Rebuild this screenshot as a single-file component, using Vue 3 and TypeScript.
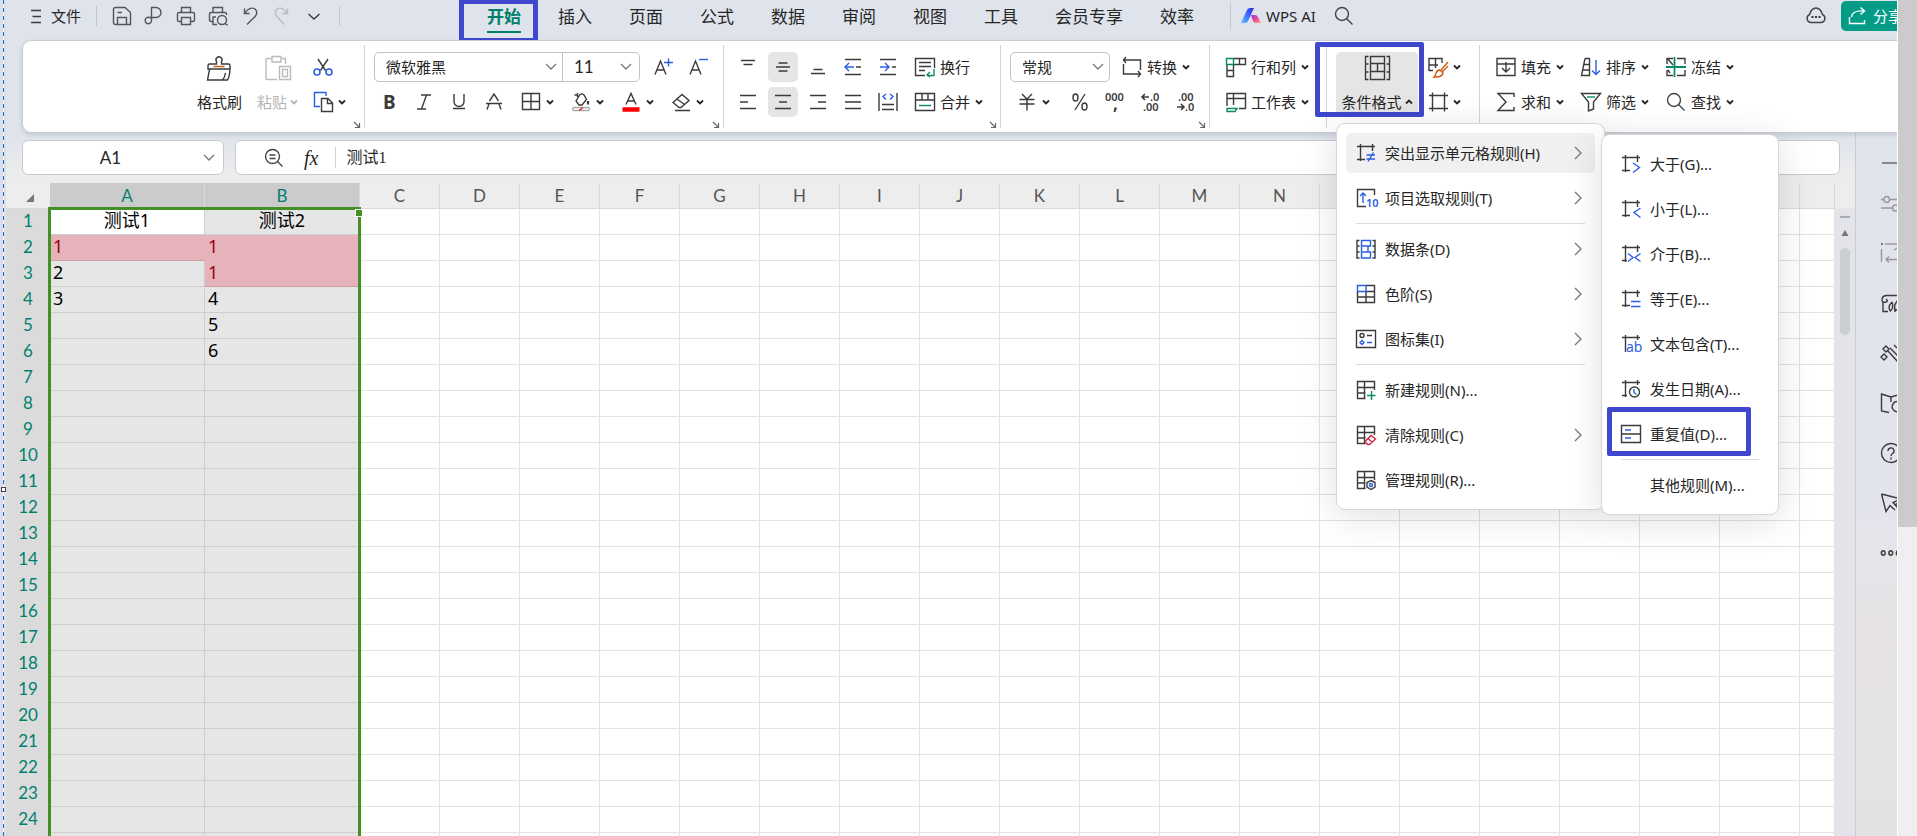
<script setup lang="ts">
import { h, ref } from 'vue'

interface Shape {
  d?: string
  t?: string
  x?: number
  y?: number
  s?: number
  c?: string
  w?: number
  b?: number
}

const K = '#3b3b3b'
const BL = '#2b5fe3'
const GR = '#0a8a66'
const OR = '#cf5a14'
const RD = '#d1274b'

const crop = 'M1 3.5H19M4.5 1V18M16.5 1V8M1 16.5H9'
const table = 'M18.5 10V1.5H1.5V18.5H9.5M1.5 7.5H18.5M1.5 13H9.5M8.5 1.5V18.5'

const icons: Record<string, Shape[]> = {
  menu: [{ d: 'M5 4.5H15M6.5 10.5H15M5 16.5H15' }],
  save: [{ d: 'M3.5 1.5H13L18.5 6.5V18.5H3.5Q1.5 18.5 1.5 16.5V3.5Q1.5 1.5 3.5 1.5M5.5 18V11.5H14.5V18M5.5 6.5H10', c: '#555' }],
  pdf: [{ d: 'M7.5 15V1.5H12A5 5 0 0 1 12 11.5H5.5A3.2 3.2 0 1 0 7.5 15', c: '#555' }],
  print: [{ d: 'M5.5 6V1.5H14.5V6M5 15.5H3Q1.5 15.5 1.5 14V8Q1.5 6.5 3 6.5H17Q18.5 6.5 18.5 8V14Q18.5 15.5 17 15.5H15M5.5 11.5H14.5V18.5H5.5Z', c: '#555' }],
  preview: [{ d: 'M5 6V1.5H14.5V6M5 15.5H3Q1.5 15.5 1.5 14V8Q1.5 6.5 3 6.5H17Q18.5 6.5 18.5 8V9M9 18.5H5V11H8M18.5 14A4.5 4.5 0 1 1 9.5 14A4.5 4.5 0 1 1 18.5 14M17 17L19.5 19.5', c: '#555' }],
  undo: [{ d: 'M4.500 2.500V7.500H9.500M5 7C8 2 13 1 15.500 3.500C18 6 16.500 10 13 12.500L7 18.500', c: '#555' }],
  redo: [{ d: 'M15.500 2.500V7.500H10.500M15 7C12 2 7 1 4.500 3.500C2 6 3.500 10 7 12.500L12 18.500', c: '#b9bcc2' }],
  more: [{ d: 'M4.500 8L10 13L15.500 8' }],
  search: [{ d: 'M14.500 8A6.500 6.500 0 1 1 1.500 8A6.500 6.500 0 1 1 14.500 8M12.500 12.500L18.500 18.500', c: '#444' }],
  cloud: [{ d: 'M5 16.500A4.200 4.200 0 0 1 3.500 8.500Q5.500 2 10 2Q14.500 2 16.500 8.500A4.200 4.200 0 0 1 15 16.500Z', c: '#444' }, { d: 'M5.500 11h2M9 11h2M12.500 11h2', w: 2 }],
  share: [{ d: 'M1.500 11V17.500H16.500V14M3.500 11C4 6 9 4.500 16 5M12.500 1.500L16.500 5L12.500 8.500', c: '#fff' }],
  cut: [{ d: 'M5 2L12.500 13.500M15 2L7.500 13.500' }, { d: 'M7 15A3 3 0 1 1 1 15A3 3 0 1 1 7 15M19 15A3 3 0 1 1 13 15A3 3 0 1 1 19 15', c: BL, w: 1.6 }],
  copy: [{ d: 'M7 14.500H1.500V.500H13V4', c: BL }, { d: 'M8.500 6.500H15L19.500 11V19.500H8.500ZM14.500 6.500V11.500H19.500' }],
  brush: [{ d: 'M9.500 9V6.500A3 3 0 1 1 14.500 6.500V9H21.500Q23 9 23 10.500V14H1V10.500Q1 9 2.500 9ZM2.500 14.500L.500 25H20.500Q22.500 22 23 14.500M15.500 25Q18 22 18.500 18' }, { d: 'M6.500 11.500H17.500', c: OR }],
  paste: [{ d: 'M6 3.500H2Q1 3.500 1 4.500V23.500Q1 24.500 2 24.500H12M17 3.500H20.500V9M7 1.500H16V7H7ZM14.500 11.500H25.500V24.500H14.500ZM17.500 14.500H22.500V21.500H17.500Z', c: '#bbb' }],
  bigger: [{ d: 'M2 17.500L7.500 4L13 17.500M4 13H11' }, { d: 'M11 5.500H20M15.500 1.500V9.500', c: BL }],
  smaller: [{ d: 'M2 17.500L7.500 4L13 17.500M4 13H11' }, { d: 'M11 2.500H20', c: BL }],
  bold: [{ t: 'B', x: 4, y: 17, s: 19, b: 700 }],
  italic: [{ d: 'M7 3H17M3 17H12M12.500 3L7.500 17' }],
  underline: [{ d: 'M5 2V9.500A5 5 0 0 0 15 9.500V2M4 16.500H16' }],
  strike: [{ d: 'M5.500 9L10 2L14.500 9M5 12L3 17.500M15 12L17 17.500M2 11.500H18' }],
  borders: [{ d: 'M1.500 1.500H18.500V17.500H1.500ZM10 1.500V17.500M1.500 9.500H18.500' }],
  fill: [{ d: 'M6.500 3H3.500M6.500 1V5M5 9L9 2.500Q11 1 13 3L15.500 7.500L11 13H8Z' }, { d: 'M17 9v3.500', w: 2.200 }, { d: 'M2.500 15.500H17.500Q19.500 17 17.500 18.500H2.500Q.500 17 2.500 15.500', c: '#aaa' }, { d: 'M8 18.500L12 15.500', c: '#e22' }],
  color: [{ d: 'M5 12.500L10 1.500L15 12.500M6.500 9H13.500' }, { d: 'M1.500 17.500H18.500', c: '#f00', w: 4.500 }],
  eraser: [{ d: 'M8 15.500L2 10.500L11 2.500L18 8.500L10 15.500ZM6 7L13.500 12.500M4 18.500H19' }],
  top: [{ d: 'M3 3.500H17M5.500 7.500H14.500' }],
  middle: [{ d: 'M5.500 6H14.500M3 10H17M5.500 14H14.500' }],
  bottom: [{ d: 'M5.500 12.500H14.500M3 16.500H17' }],
  left: [{ d: 'M2 3.500H18M2 10H10M2 16.500H18' }],
  center: [{ d: 'M2 3.500H18M6 10H14M2 16.500H18' }],
  right: [{ d: 'M2 3.500H18M10 10H18M2 16.500H18' }],
  justify: [{ d: 'M2 3.500H18M2 10H18M2 16.500H18' }],
  outdent: [{ d: 'M2 2.500H18M13 10H18M2 17.500H18' }, { d: 'M2 10H11M6 6L2 10L6 14', c: BL }],
  indent: [{ d: 'M2 2.500H18M14 10H18M2 17.500H18' }, { d: 'M2 10H11M7 6L11 10L7 14', c: BL }],
  spread: [{ d: 'M1 1V19M19 1V19M4 12.500H16M4 17.500H16' }, { d: 'M8 2L5 4.500L8 7.500M12 2L15 4.500L12 7.500', c: BL }],
  wrap: [{ d: 'M10 18.500H.500V1.500H19.500V11M4 5.500H16M4 9.500H16M4 13.500H10' }, { d: 'M19 12V18.500H12M15 15L12 18L15 20', c: GR }],
  merge: [{ d: 'M.500 1.500H19.500V18.500H.500ZM.500 8H19.500M7 1.500V8M13 1.500V8' }, { d: 'M4 13.500H16', c: GR }],
  convert: [{ d: 'M4 0L1.500 3L4 6M1.500 3H18.500V13M1.500 7V17H18.500M16 14L18.500 17L16 20' }],
  percent: [{ d: 'M15 2L5 18M8 5.500A2.500 3.500 0 1 1 3 5.500A2.500 3.500 0 1 1 8 5.500M17 14.500A2.500 3.500 0 1 1 12 14.500A2.500 3.500 0 1 1 17 14.500' }],
  yen: [{ d: 'M5 2L10 7L15 2M2.500 7.500H17.500M2.500 12H17.500M10 7V18.500' }],
  comma: [{ t: '000', x: 0, y: 9, s: 11, b: 600 }, { t: ',', x: 8, y: 18, s: 17, b: 700 }],
  decLess: [{ d: 'M9 5H2M5 2L2 5L5 8', w: 1.600 }, { t: '.0', x: 10, y: 9, s: 11, b: 600 }, { t: '.00', x: 3, y: 19, s: 11, b: 600 }],
  decMore: [{ t: '.00', x: 3, y: 9, s: 11, b: 600 }, { d: 'M2 15H9M6 12L9 15L6 18', w: 1.600 }, { t: '.0', x: 10, y: 19, s: 11, b: 600 }],
  rowcol: [{ d: 'M8 1.500H19.500V7.500H8M13.500 1.500V7.500M1 8V19.500H7.500V8M1 13.500H7.500' }, { d: 'M.500 1.500H7.500V7.500H.500Z', c: GR }],
  sheet: [{ d: 'M1 14V1.500H19.500V16.500H13M1 6.500H19.500M7.500 1.500V13' }, { d: 'M1 16.500H11L9 19.500H1Z', c: GR }],
  condfmt: [{ d: 'M4.500 1.500H1.500V24.500H4.500M1.500 9H4.500M1.500 17H4.500M22.500 1.500H25.500V24.500H22.500M25.500 9H22.500M25.500 17H22.500M6.500 1.500H20.500V8.500H6.500ZM6.500 8.500V16.500M20.500 8.500V16.500M6.500 16.500H20.500V24.500H6.500ZM13.500 8.500V16.500' }],
  style: [{ d: 'M1 14V1.500H14V6M1 8H10M7.500 1.500V11M1 13.500H5' }, { d: 'M20 5L13 13M20 9L14 15M12 13L15 16Q14 20 8 20H6Q8 18 8 16Q9 13 12 13', c: OR }],
  frame: [{ d: 'M1 3.500H20M1 16.500H20M4.500 .500V19.500M16.500 .500V19.500' }],
  fillDown: [{ d: 'M1 1.500H19V7H1ZM6 7H1V18.500H19V7H14M10 5V14.500M6 11L10 15L14 11' }],
  sum: [{ d: 'M18 5V1.500H2L10 10L2 18.500H18V15' }],
  sort: [{ d: 'M4 1.500H8.500V18.500H.500L4 1.500M3 7.500H8.500M2 13H8.500' }, { d: 'M15 3V17.500M11 13.500L15 17.500L19 13.500', c: BL }],
  filter: [{ d: 'M.500 1.500H19.500L12.500 10V17L7.500 19V10Z' }, { d: 'M6 5H14', c: GR }],
  freeze: [{ d: 'M1 7V1.500H7M11 1.500H19V7M1 13V18.500H7M11 18.500H19V13M2 2L7 8M2 13L4 16' }, { d: 'M0 10H20M8.500 0V20', c: GR, w: 1.800 }],
  zoom: [{ d: 'M15.500 8.500A7 7 0 1 1 1.500 8.500A7 7 0 1 1 15.500 8.500M13.500 13.500L18.500 18.500M5.500 7H11.500M5.500 10.500H11.500', c: '#444' }],
  hNe: [{ d: crop }, { d: 'M10.500 12H19M10.500 16H19M17.500 9.500L12 18.500', c: BL }],
  top10: [{ d: 'M10 18.500H1.500V1.500H18.500V7' }, { d: 'M7 15V5M4 8L7 5L10 8', c: BL }, { t: '10', x: 10, y: 18.500, s: 11, c: BL, b: 600 }],
  bars: [{ d: 'M3.500 1.500H1V19H3.500M1 7H3.500M1 13H3.500M16.500 1.500H19V19H16.500M19 7H16.500M19 13H16.500' }, { d: 'M5.500 1.500H14.500V7H5.500ZM5.500 13H14.500V19H5.500ZM5.500 7V13M12 7V13', c: BL }],
  scale: [{ d: 'M1.500 7.500V18.500H18.500V1.500H10M10 7.500V18.500M1.500 13H18.500M10 7.500H18.500' }, { d: 'M1.500 1.500H10V7.500H1.500Z', c: BL }],
  iconset: [{ d: 'M.500 1.500H19.500V18.500H.500ZM11 6.500H16M8 6.500A2 2 0 1 1 4 6.500A2 2 0 1 1 8 6.500' }, { d: 'M11 13.500H16M6 11.500L8 13.500L6 15.500L4 13.500Z', c: BL }],
  newRule: [{ d: table }, { d: 'M11 15.500H19.500M15.500 11V20', c: GR }],
  clearRule: [{ d: table }, { d: 'M9 16.500L15 10.500L19.500 14L13.500 19.500H11.500ZM12 13.500L16 17', c: RD }],
  manageRule: [{ d: table }, { d: 'M15 10.500L19 12.500V17L15 19.500L11 17V12.500Z' }, { d: 'M16.500 15A1.500 1.500 0 1 1 13.500 15A1.500 1.500 0 1 1 16.500 15', c: BL }],
  gt: [{ d: crop }, { d: 'M12 9L18.500 13.500L12 18.500', c: BL }],
  lt: [{ d: crop }, { d: 'M19.500 9L13 13.500L19.500 18.500', c: BL }],
  between: [{ d: 'M1 3.500H19M4.500 1V18M16.500 1V8M1 16.500H6' }, { d: 'M7 9.500L12 13.500L7 17.500M19.500 9.500L14 13.500L19.500 17.500', c: BL }],
  equal: [{ d: crop }, { d: 'M10 12.500H19.500M10 17.500H19.500', c: BL }],
  contains: [{ d: 'M1 3.500H19M4.500 1V18M16.500 1V6' }, { t: 'ab', x: 5, y: 18, s: 14, c: BL }],
  date: [{ d: 'M1 3.500H19M4.500 1V18M16.500 1V6M1 16.500H6M18.500 13A5 5 0 1 1 8.500 13A5 5 0 1 1 18.500 13' }, { d: 'M13 10V13.500L15.500 15.500', c: BL }],
  dup: [{ d: 'M.500 1.500H19.500V18.500H.500ZM.500 10H19.500' }, { d: 'M4 6H10M4 14H10', c: BL }],
  minus: [{ d: 'M1 10H20', c: '#888', w: 2 }],
  sliders: [{ d: 'M0 6.500H3M8.500 6.500H20M8.500 6.500A2.700 3 0 1 1 3 6.500A2.700 3 0 1 1 8.500 6.500M0 15H12M17 15A2.700 3 0 1 1 11.500 15A2.700 3 0 1 1 17 15', c: '#999' }],
  select: [{ d: 'M.500 6V19M4 1H20M5 16.500H20M8 13.500L5 16.500L8 19.500M13 7L16 5L18 7', c: '#999' }, { d: 'M0 1h2', c: '#777', w: 2 }],
  leaf: [{ d: 'M20 2.500H5Q1 3 1 7Q1 10 5 9Q8 8 5 6M2 9.500V18.500H7M11 9Q6 14 9.500 18Q13 15 11 9M18 6Q12 11 14 18Q20 15 18 6M14 19V15' }],
  wand: [{ d: 'M5 3L8 6L5 9L2 6ZM3 11L6 14L3 17L0 14ZM9 5L20 16M7 8L17 19M13 2L16 5' }],
  book: [{ d: 'M10 4L.500 1V18L8 19.500M10 4L20 1M10 4V9M20 17A5 5 0 1 1 18 9' }],
  help: [{ d: 'M19.500 10A9.500 9.500 0 1 1 .500 10A9.500 9.500 0 1 1 19.500 10M7 8A3 3 0 1 1 11.500 10.500Q10 11.500 10 13M10 14.500V16.500' }],
  pointer: [{ d: 'M.500 1L20 6L12 9.500L17 15M.500 1L5 18.500L9 12.500L14 17M14 12L18 9' }],
  dots: [{ d: 'M4 10A1.800 1.800 0 1 1 .500 10A1.800 1.800 0 1 1 4 10M11.500 10A1.800 1.800 0 1 1 8 10A1.800 1.800 0 1 1 11.500 10M19 10A1.800 1.800 0 1 1 15.500 10A1.800 1.800 0 1 1 19 10', w: 1.600 }],
}

const Icon = (props: { name: string; size?: number }) => {
  const size = props.size ?? 20
  return h(
    'svg',
    { class: 'icon', viewBox: `0 0 ${size} ${size}`, width: size, height: size, fill: 'none', 'aria-hidden': 'true' },
    (icons[props.name] ?? []).map((s) =>
      s.t
        ? h('text', { x: s.x, y: s.y, 'font-size': s.s, 'font-weight': s.b ?? 400, fill: s.c ?? K }, s.t)
        : h('path', { d: s.d, stroke: s.c ?? K, 'stroke-width': s.w ?? 1.4 }),
    ),
  )
}
Icon.props = ['name', 'size']

const Caret = () =>
  h('svg', { class: 'caret', viewBox: '0 0 8 8', width: 8, height: 8, fill: 'none', 'aria-hidden': 'true' }, [
    h('path', { d: 'M1 2.5L4 5.500L7 2.5', stroke: 'currentColor', 'stroke-width': 1.8 }),
  ])

const quick = [
  ['save', '保存'], ['pdf', '输出为PDF'], ['print', '打印'], ['preview', '打印预览'],
  ['undo', '撤销'], ['redo', '恢复'], ['more', '更多'],
]
const tabs = ['开始', '插入', '页面', '公式', '数据', '审阅', '视图', '工具', '会员专享', '效率']
const activeTab = ref('开始')
const fontName = ref('微软雅黑')
const fontSize = ref('11')
const format = ref('常规')
const formula = ref('测试1')
const cellName = ref('A1')

interface Tool { icon: string; label: string; text?: string; caret?: boolean; on?: boolean }
const fontTools: Tool[] = [
  { icon: 'bold', label: '加粗' }, { icon: 'italic', label: '倾斜' }, { icon: 'underline', label: '下划线' }, { icon: 'strike', label: '删除线' },
  { icon: 'borders', label: '边框', caret: true }, { icon: 'fill', label: '填充颜色', caret: true },
  { icon: 'color', label: '字体颜色', caret: true }, { icon: 'eraser', label: '清除', caret: true },
]
const alignRows: Tool[][] = [
  [
    { icon: 'top', label: '顶端对齐' }, { icon: 'middle', label: '垂直居中', on: true }, { icon: 'bottom', label: '底端对齐' },
    { icon: 'outdent', label: '减少缩进' }, { icon: 'indent', label: '增加缩进' }, { icon: 'wrap', label: '换行', text: '换行' },
  ],
  [
    { icon: 'left', label: '左对齐' }, { icon: 'center', label: '水平居中', on: true }, { icon: 'right', label: '右对齐' },
    { icon: 'justify', label: '两端对齐' }, { icon: 'spread', label: '分散对齐' }, { icon: 'merge', label: '合并', text: '合并', caret: true },
  ],
]
const numberTools: Tool[] = [
  { icon: 'percent', label: '百分比' }, { icon: 'comma', label: '千位分隔' },
  { icon: 'decLess', label: '增加小数位' }, { icon: 'decMore', label: '减少小数位' },
]
const sheetTools: Tool[] = [
  { icon: 'rowcol', label: '行和列', text: '行和列', caret: true },
  { icon: 'sheet', label: '工作表', text: '工作表', caret: true },
]
const styleTools: Tool[] = [
  { icon: 'style', label: '表格样式', caret: true }, { icon: 'frame', label: '单元格样式', caret: true },
]
const editRows: Tool[][] = [
  [
    { icon: 'fillDown', label: '填充', text: '填充', caret: true }, { icon: 'sort', label: '排序', text: '排序', caret: true },
    { icon: 'freeze', label: '冻结', text: '冻结', caret: true },
  ],
  [
    { icon: 'sum', label: '求和', text: '求和', caret: true }, { icon: 'filter', label: '筛选', text: '筛选', caret: true },
    { icon: 'search', label: '查找', text: '查找', caret: true },
  ],
]

interface Entry { icon?: string; text: string; more?: boolean; sep?: boolean; on?: boolean; marked?: boolean }
const menu: Entry[] = [
  { icon: 'hNe', text: '突出显示单元格规则(H)', more: true, on: true },
  { icon: 'top10', text: '项目选取规则(T)', more: true },
  { icon: 'bars', text: '数据条(D)', more: true, sep: true },
  { icon: 'scale', text: '色阶(S)', more: true },
  { icon: 'iconset', text: '图标集(I)', more: true },
  { icon: 'newRule', text: '新建规则(N)...', sep: true },
  { icon: 'clearRule', text: '清除规则(C)', more: true },
  { icon: 'manageRule', text: '管理规则(R)...' },
]
const submenu: Entry[] = [
  { icon: 'gt', text: '大于(G)...' },
  { icon: 'lt', text: '小于(L)...' },
  { icon: 'between', text: '介于(B)...' },
  { icon: 'equal', text: '等于(E)...' },
  { icon: 'contains', text: '文本包含(T)...' },
  { icon: 'date', text: '发生日期(A)...' },
  { icon: 'dup', text: '重复值(D)...', marked: true },
  { text: '其他规则(M)...', sep: true },
]

const columns = 'ABCDEFGHIJKLMNOPQRST'.split('')
const values: Record<string, string> = {
  A1: '测试1', B1: '测试2', A2: '1', B2: '1', A3: '2', B3: '1', A4: '3', B4: '4', B5: '5', B6: '6',
}
const duplicates = new Set(['A2', 'B2', 'B3'])
const side = [
  ['minus', '收起'], ['sliders', '属性'], ['select', '选择'], ['leaf', '素材'], ['wand', '智能工具'],
  ['book', '查阅'], ['help', '帮助'], ['pointer', '指针'], ['dots', '更多'],
]
</script>

<template>
  <div class="page">
    <div class="edge"><span class="grip"></span></div>
    <div class="app">
      <header class="titlebar">
        <button class="file"><Icon name="menu" />文件</button>
        <span class="rule"></span>
        <div class="quick">
          <button v-for="[icon, label] in quick" :key="icon" :aria-label="label"><Icon :name="icon" /></button>
        </div>
        <span class="rule"></span>
        <nav class="tabs">
          <button v-for="t in tabs" :key="t" class="tab" :class="{ active: t === activeTab }" @click="activeTab = t">
            {{ t }}<span v-if="t === '开始'" class="mark mark-tab"></span>
          </button>
        </nav>
        <span class="rule tall"></span>
        <button class="ai">
          <svg class="icon" viewBox="0 0 20 20" width="20" height="20" aria-hidden="true">
            <defs>
              <linearGradient id="aiBlue" x1="1" y1="0" x2="0" y2="1">
                <stop offset="0" stop-color="#2b2fe8" /><stop offset="0.5" stop-color="#3f6cff" /><stop offset="1" stop-color="#5ec8ff" />
              </linearGradient>
              <linearGradient id="aiPink" x1="0" y1="0" x2="1" y2="1">
                <stop offset="0" stop-color="#7b3cf5" /><stop offset="0.5" stop-color="#f0489c" /><stop offset="1" stop-color="#ffab7a" />
              </linearGradient>
            </defs>
            <path d="M0 17L6 4Q7 2 9 2H13L7 15Q6 17 4 17Z" fill="url(#aiBlue)" />
            <path d="M10 9H14Q16 9 17 11L20 17H15Q13 17 12 15Z" fill="url(#aiPink)" />
          </svg>
          WPS AI
        </button>
        <button class="find" aria-label="搜索"><Icon name="search" /></button>
        <button class="cloud" aria-label="云同步"><Icon name="cloud" /></button>
        <button class="share"><Icon name="share" />分享</button>
      </header>

      <section class="ribbon">
        <div class="group g-clip">
          <button class="big"><Icon name="brush" :size="26" /><span>格式刷</span></button>
          <button class="big dim"><Icon name="paste" :size="26" /><span>粘贴<Caret /></span></button>
          <div class="rows">
            <div class="row"><button class="plain" aria-label="剪切"><Icon name="cut" /></button></div>
            <div class="row"><button class="plain" aria-label="复制"><Icon name="copy" /><Caret /></button></div>
          </div>
          <svg class="launch" viewBox="0 0 8 8"><path d="M1 1L6 6M6.500 2V6.500H2" /></svg>
        </div>

        <div class="group g-font">
          <div class="rows">
            <div class="row">
              <div class="fontbox">
                <label class="pick wide">
                  <select v-model="fontName" aria-label="字体"><option>微软雅黑</option></select>
                  <svg class="arrow" viewBox="0 0 12 8"><path d="M1 1L6 6L11 1" /></svg>
                </label>
                <label class="pick size">
                  <select v-model="fontSize" aria-label="字号"><option>11</option></select>
                  <svg class="arrow" viewBox="0 0 12 8"><path d="M1 1L6 6L11 1" /></svg>
                </label>
              </div>
              <button class="tool" aria-label="增大字号"><Icon name="bigger" /></button>
              <button class="tool" aria-label="减小字号"><Icon name="smaller" /></button>
            </div>
            <div class="row">
              <button v-for="t in fontTools" :key="t.icon" class="tool" :class="{ drop: t.caret }" :aria-label="t.label">
                <Icon :name="t.icon" /><Caret v-if="t.caret" />
              </button>
            </div>
          </div>
          <svg class="launch" viewBox="0 0 8 8"><path d="M1 1L6 6M6.500 2V6.500H2" /></svg>
        </div>

        <div class="group g-align">
          <div class="rows">
            <div v-for="(r, n) in alignRows" :key="n" class="row">
              <button v-for="t in r" :key="t.icon" class="tool" :class="{ drop: t.text, on: t.on }" :aria-label="t.label">
                <Icon :name="t.icon" /><span v-if="t.text">{{ t.text }}</span><Caret v-if="t.caret" />
              </button>
            </div>
          </div>
          <svg class="launch" viewBox="0 0 8 8"><path d="M1 1L6 6M6.500 2V6.500H2" /></svg>
        </div>

        <div class="group g-number">
          <div class="rows">
            <div class="row">
              <label class="pick boxed">
                <select v-model="format" aria-label="数字格式"><option>常规</option></select>
                <svg class="arrow" viewBox="0 0 12 8"><path d="M1 1L6 6L11 1" /></svg>
              </label>
              <button class="tool drop"><Icon name="convert" /><span>转换</span><Caret /></button>
            </div>
            <div class="row">
              <button class="tool drop currency" aria-label="货币"><Icon name="yen" /><Caret /></button>
              <button v-for="t in numberTools" :key="t.icon" class="tool" :aria-label="t.label"><Icon :name="t.icon" /></button>
            </div>
          </div>
          <svg class="launch" viewBox="0 0 8 8"><path d="M1 1L6 6M6.500 2V6.500H2" /></svg>
        </div>

        <div class="group g-sheet">
          <div class="rows">
            <div v-for="t in sheetTools" :key="t.icon" class="row">
              <button class="tool drop"><Icon :name="t.icon" /><span>{{ t.text }}</span><Caret /></button>
            </div>
          </div>
        </div>

        <div class="group g-style">
          <div class="cond">
            <button class="big open"><Icon name="condfmt" :size="26" /><span>条件格式<Caret class="up" /></span></button>
            <span class="mark mark-cond"></span>
            <div class="menu main-menu" role="menu">
              <template v-for="m in menu" :key="m.text">
                <hr v-if="m.sep" />
                <button class="entry" :class="{ on: m.on }" role="menuitem">
                  <Icon :name="m.icon!" /><span>{{ m.text }}</span>
                  <svg v-if="m.more" class="next" viewBox="0 0 8 14"><path d="M1 1L7 7L1 13" /></svg>
                </button>
              </template>
            </div>
            <div class="menu sub-menu" role="menu">
              <template v-for="m in submenu" :key="m.text">
                <hr v-if="m.sep" />
                <button class="entry" role="menuitem">
                  <Icon :name="m.icon ?? ''" /><span>{{ m.text }}</span>
                  <span v-if="m.marked" class="mark mark-dup"></span>
                </button>
              </template>
            </div>
          </div>
          <div class="rows">
            <div v-for="t in styleTools" :key="t.icon" class="row">
              <button class="tool drop" :aria-label="t.label"><Icon :name="t.icon" /><Caret /></button>
            </div>
          </div>
        </div>

        <div class="group g-edit">
          <div class="rows">
            <div v-for="(r, n) in editRows" :key="n" class="row">
              <button v-for="t in r" :key="t.icon" class="tool drop"><Icon :name="t.icon" /><span>{{ t.text }}</span><Caret /></button>
            </div>
          </div>
        </div>
      </section>

      <div class="body">
        <main class="main">
          <div class="formula-row">
            <label class="namebox">
              <input v-model="cellName" aria-label="名称框" />
              <svg class="arrow" viewBox="0 0 12 8"><path d="M1 1L6 6L11 1" /></svg>
            </label>
            <div class="formula">
              <button aria-label="缩放公式"><Icon name="zoom" /></button>
              <button class="fx">fx</button>
              <span class="bar"></span>
              <input v-model="formula" aria-label="编辑栏" />
            </div>
          </div>
          <div class="sheet">
            <div class="grid">
              <table>
                <colgroup>
                  <col class="c-head" /><col class="c-ab" /><col class="c-ab" />
                  <col v-for="c in columns.slice(2)" :key="c" class="c-n" /><col />
                </colgroup>
                <thead>
                  <tr>
                    <th class="corner"><svg viewBox="0 0 8 8" width="8" height="8"><path d="M8 0V8H0Z" /></svg></th>
                    <th v-for="c in columns" :key="c" :class="{ sel: c === 'A' || c === 'B' }">{{ c }}</th>
                    <th></th>
                  </tr>
                </thead>
                <tbody>
                  <tr v-for="r in 25" :key="r">
                    <th>{{ r }}</th>
                    <td
                      v-for="c in columns" :key="c"
                      :class="{ sel: c < 'C', cur: c + r === 'A1', title: r === 1, dup: duplicates.has(c + r) }"
                    >{{ values[c + r] }}</td>
                    <td></td>
                  </tr>
                </tbody>
              </table>
              <div class="selection"><span class="handle"></span></div>
            </div>
            <div class="vscroll">
              <span class="split"></span>
              <svg viewBox="0 0 8 8" width="8" height="8"><path d="M4 1L7.500 7H.5Z" fill="#777" /></svg>
              <span class="thumb"></span>
            </div>
          </div>
        </main>
        <aside class="side">
          <button v-for="[icon, label] in side" :key="icon" :aria-label="label"><Icon :name="icon" /></button>
        </aside>
      </div>
    </div>
    <div class="outer"><span></span></div>
  </div>
</template>

<style>
body { margin: 0; }
</style>

<style scoped>
.page {
  display: flex;
  height: 100vh;
  overflow: hidden;
  background: #dfe3eb;
  color: #262626;
  font: 15px/20px "Noto Sans", "Noto Sans CJK SC", sans-serif;
}
.page *, .page *::before { box-sizing: border-box; }
button, input, select { font: inherit; color: inherit; }
button { display: flex; align-items: center; flex: none; margin: 0; padding: 0; border: 0; background: none; white-space: nowrap; }
input, select { margin: 0; padding: 0; border: 0; outline: 0; background: none; min-width: 0; }
.icon { display: block; flex: none; overflow: visible; }
.caret { flex: none; display: block; }
.mark { position: absolute; border: 5px solid #3f48cc; border-radius: 2px; pointer-events: none; }

.edge {
  position: relative;
  flex: none;
  width: 6px;
  background: repeating-linear-gradient(#0f6fc6 0 4px, #fff 4px 8px) 3px 0 / 1px 100% no-repeat, #d9dfe9;
}
.grip { position: absolute; left: 1px; top: 487px; width: 5px; height: 5px; border: 1px solid #444; background: #fff; }
.app { flex: 1; min-width: 0; display: flex; flex-direction: column; overflow: hidden; border-right: 1px solid #fff; }
.outer { flex: none; width: 19px; background: #efefef; }
.outer span { display: block; height: 63%; background: #cbcbcb; }

.titlebar { display: flex; align-items: center; flex: none; height: 32px; margin-bottom: 8px; padding-left: 20px; }
.file { gap: 5px; }
.rule { flex: none; width: 1px; height: 20px; margin: 0 15px; background: #c2c6ce; }
.tall { height: 26px; margin: 0 10px 0 36px; }
.quick { display: flex; gap: 12px; }
.tabs { display: flex; gap: 37px; margin-left: 132px; font-size: 17px; }
.tab { position: relative; height: 32px; padding-top: 2px; }
.tab.active { color: #007f6c; font-weight: 700; }
.tab.active::before { content: ""; position: absolute; left: 0; right: 0; bottom: -1px; height: 2px; background: #007f6c; }
.mark-tab { left: -28px; top: -1px; width: 79px; height: 44px; }
.ai { gap: 5px; }
.find { margin-left: 18px; }
.cloud { margin-left: auto; }
.share {
  gap: 5px;
  width: 56px;
  height: 30px;
  margin-left: 15px;
  padding-left: 7px;
  overflow: hidden;
  border-radius: 5px 0 0 5px;
  background: #049b87;
  color: #fff;
}

.ribbon {
  position: relative;
  z-index: 2;
  display: flex;
  flex: none;
  height: 93px;
  margin-left: 16px;
  border: 1px solid #c9ced6;
  border-right: 0;
  border-radius: 9px 0 0 9px;
  background: #fff;
  box-shadow: 0 2px 4px rgba(90, 100, 120, 0.2);
}
.group { position: relative; display: flex; flex: none; padding: 11px 0 0 10px; }
.group + .group::before { content: ""; position: absolute; left: 0; top: 4px; width: 1px; height: 83px; background: #d4d4d4; }
.g-clip { width: 341px; gap: 15px; padding-left: 174px; }
.g-font { width: 359px; }
.g-align { width: 277px; }
.g-number { width: 209px; }
.g-sheet { width: 117px; }
.g-style { width: 153px; gap: 3px; }
.g-edit { flex: 1; }
.rows { display: flex; flex-direction: column; gap: 5px; }
.row { display: flex; gap: 5px; height: 30px; }
.tool { justify-content: center; width: 30px; height: 30px; border-radius: 5px; }
.tool.drop { justify-content: flex-start; gap: 5px; width: auto; padding: 0 5px 0 7px; }
.on { background: #e5e5e5; }
.currency { margin-right: 5px; }
.plain { gap: 5px; }
.big { flex-direction: column; height: 65px; padding-top: 3px; gap: 11px; }
.big span { display: flex; align-items: center; gap: 3px; }
.dim { color: #b5b5b5; }
.open { width: 82px; border-radius: 5px 5px 0 0; background: #e5e5e5; }
.up { transform: rotate(180deg); }
.launch { position: absolute; right: 3px; bottom: 3px; width: 8px; height: 8px; fill: none; stroke: #666; stroke-width: 1.2; }
.arrow { position: absolute; right: 5px; width: 12px; height: 8px; fill: none; stroke: #777; stroke-width: 1.3; pointer-events: none; }
.fontbox { display: flex; width: 266px; margin-right: 3px; border: 1px solid #c3c3c3; border-radius: 5px; }
.pick { position: relative; display: flex; align-items: center; }
.pick select { width: 100%; height: 28px; padding-left: 11px; appearance: none; }
.wide { flex: 1; border-right: 1px solid #c3c3c3; }
.size { width: 76px; }
.size select { font-family: Lato, "Noto Sans", sans-serif; font-size: 17px; }
.size .arrow { right: 7px; }
.boxed { width: 100px; border: 1px solid #c3c3c3; border-radius: 5px; }

.cond { position: relative; z-index: 3; }
.mark-cond { left: -21px; top: -10px; width: 109px; height: 75px; }
.menu {
  position: absolute;
  display: flex;
  flex-direction: column;
  gap: 5px;
  padding: 9px;
  border: 1px solid #d6d6d6;
  border-radius: 9px;
  background: #fff;
  box-shadow: 0 6px 36px rgba(0, 0, 0, 0.13);
}
.main-menu { left: 0; top: 71px; width: 269px; }
.sub-menu { left: 265px; top: 82px; width: 178px; }
.menu hr { width: auto; height: 1px; margin: 0 10px; border: 0; background: #dcdcdc; align-self: stretch; }
.entry { position: relative; gap: 9px; height: 40px; padding: 0 13px 0 10px; border-radius: 5px; text-align: left; }
.entry.on { background: #f0f0f0; }
.next { width: 8px; height: 14px; margin-left: auto; fill: none; stroke: #777; stroke-width: 1.3; }
.mark-dup { left: -4px; top: -7px; width: 144px; height: 49px; }

.body { display: flex; flex: 1; min-height: 0; }
.main { display: flex; flex-direction: column; flex: 1; min-width: 0; background: linear-gradient(#dfe3eb, #ededed 46px, #ededed 75px, #e3e4e9 76px); }
.formula-row { display: flex; flex: none; gap: 11px; padding: 7px 15px 8px 16px; }
.namebox, .formula { position: relative; display: flex; align-items: center; height: 35px; border: 1px solid #c6cad0; border-radius: 6px; background: #fff; }
.namebox { flex: none; width: 202px; }
.namebox input { width: 175px; text-align: center; font-family: Lato, "Noto Sans", sans-serif; font-size: 17px; }
.namebox .arrow { right: 8px; }
.formula { flex: 1; padding-left: 28px; }
.fx { margin-left: 20px; font: italic 20px/24px "Liberation Serif", serif; }
.bar { width: 1px; height: 21px; margin: 0 10px 0 17px; background: #d0d0d0; }
.formula input { flex: 1; font: 16px/24px "Liberation Serif", "Noto Sans CJK SC", serif; }

.sheet { display: flex; flex: 1; min-height: 0; }
.grid { position: relative; flex: 1; min-width: 0; overflow: hidden; }
table { width: 100%; table-layout: fixed; border-collapse: separate; border-spacing: 0; }
.c-head { width: 44px; }
.c-ab { width: 155px; }
.c-n { width: 80px; }
th { height: 26px; padding: 0; overflow: hidden; font: 17px/24px Lato, "Noto Sans", sans-serif; }
thead th { border-right: 1px solid #d9d9d9; border-bottom: 1px solid #d9d9d9; background: #ededed; color: #555; }
thead th.sel { background: #cbcbcb; color: #00806f; }
thead .corner { padding-left: 4px; border-right: 0; fill: #777; }
tbody th { padding-bottom: 2px; background: #dbdbdb; color: #00806f; }
td {
  height: 26px;
  padding: 0 0 2px 3px;
  overflow: hidden;
  border-right: 1px solid #e2e2e2;
  border-bottom: 1px solid #e2e2e2;
  background: #fff;
  color: #000;
  font-size: 18px;
  line-height: 23px;
  white-space: nowrap;
}
td.sel { border-color: #cecece; background: #e6e6e6; }
td.cur { background: #fff; }
td.title { padding: 0 0 2px; text-align: center; }
td.dup { border-color: #cb9fa6; border-right-color: #e6b3bb; background: #e6b3bb; color: #9c0010; }
tr:nth-child(2) td.dup + td.dup { border-bottom-color: #e6b3bb; }
.selection { position: absolute; left: 42px; top: 24px; bottom: -4px; width: 313px; border: 3px solid #439026; }
.handle { position: absolute; right: -4px; top: 0; width: 6px; height: 6px; background: #439026; outline: 1px solid #fff; }
.vscroll { display: flex; flex-direction: column; align-items: center; flex: none; width: 20px; padding-top: 33px; }
.split { width: 10px; height: 2px; margin-bottom: 11px; background: #a9adb4; }
.thumb { width: 10px; height: 87px; margin-top: 11px; border-radius: 5px; background: #cacdd2; }
.side {
  flex: none;
  width: 42px;
  display: flex;
  flex-direction: column;
  gap: 30px;
  padding: 20px 0 0 25px;
  overflow: hidden;
  border-left: 1px solid #c9ccd2;
  background: linear-gradient(#dfe3eb, #e4e5ec 55%, #e7e3e4 72%, #e2e2e5);
}
.side button:first-child { margin-bottom: -10px; }
</style>
